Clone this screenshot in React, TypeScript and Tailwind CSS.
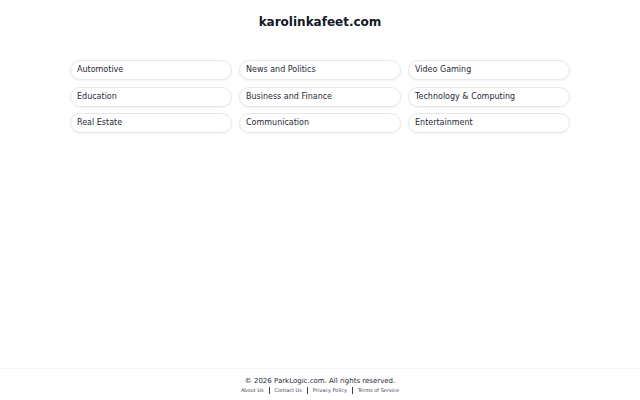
export default function App() {
  const cats = [
    'Automotive',
    'News and Politics',
    'Video Gaming',
    'Education',
    'Business and Finance',
    'Technology & Computing',
    'Real Estate',
    'Communication',
    'Entertainment',
  ]
  const links = ['About Us', 'Contact Us', 'Privacy Policy', 'Terms of Service']
  return (
    <div className="min-h-screen flex flex-col bg-white text-gray-900 font-['DejaVu_Sans',sans-serif]">
      <main className="flex-1">
        <h1 className="pt-[14px] text-center text-[12px] font-bold text-[#111827] leading-[16px]">karolinkafeet.com</h1>
        <div className="mx-auto mt-[30px] w-[500px] grid grid-cols-3 gap-x-[7px] gap-y-[6.5px]">
          {cats.map((c) => (
            <a
              key={c}
              href="#"
              className="h-5 flex items-center px-[6px] rounded-full border border-gray-200 shadow-[0_1px_2px_rgba(0,0,0,0.05)] text-[8px] text-[#1f2937]"
            >
              {c}
            </a>
          ))}
        </div>
      </main>
      <footer className="h-8 border-t border-gray-100 flex flex-col items-center pt-[7px]">
        <p className="text-[7px] leading-[10px] text-[#1f2937]">© 2026 ParkLogic.com. All rights reserved.</p>
        <div className="flex items-center text-[5px] leading-[8px] text-[#374151]">
          {links.map((l, i) => (
            <span key={l} className="flex items-center">
              {i > 0 && <span className="mx-[5px] w-px h-[7px] bg-[#374151]" />}
              <a href="#">{l}</a>
            </span>
          ))}
        </div>
      </footer>
    </div>
  )
}
